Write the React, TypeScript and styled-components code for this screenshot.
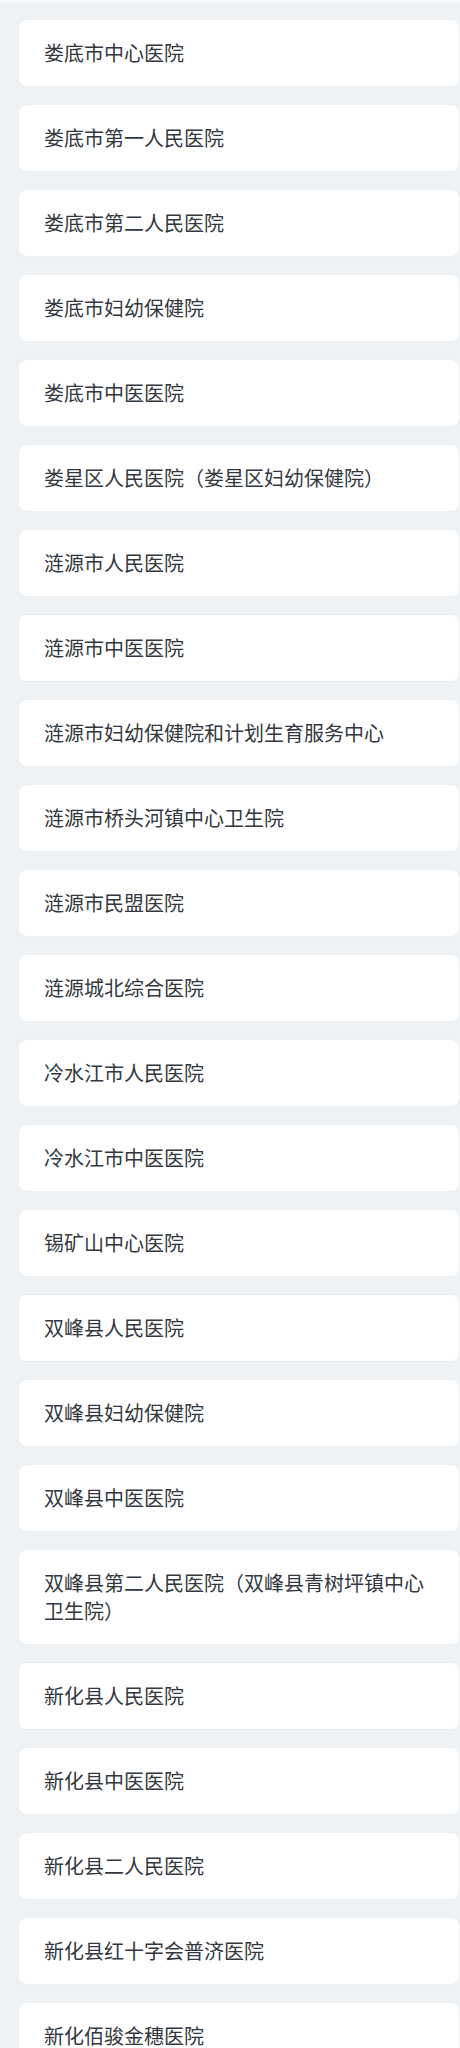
import React from "react";
import styled, { createGlobalStyle } from "styled-components";

const Global = createGlobalStyle`
  html, body { margin: 0; padding: 0; background: #eef2f5; }
  body { font-family: "Noto Sans CJK SC", "Noto Sans", sans-serif; }
`;

const Page = styled.div`
  display: flex;
  flex-direction: column;
  border-top: 3px solid #f6f8fa;
`;

const List = styled.ul`
  list-style: none;
  margin: 0;
  padding: 17px 1px 20px 19px;
  display: flex;
  flex-direction: column;
  gap: 19px;
`;

const Card = styled.li`
  background: #ffffff;
  border-radius: 7px;
  padding: 19px 25px;
  font-size: 20px;
  line-height: 28px;
  color: #333840;
  box-shadow: 0 0 1px rgba(0, 0, 0, 0.08);
`;

const names = [
  "娄底市中心医院",
  "娄底市第一人民医院",
  "娄底市第二人民医院",
  "娄底市妇幼保健院",
  "娄底市中医医院",
  "娄星区人民医院（娄星区妇幼保健院）",
  "涟源市人民医院",
  "涟源市中医医院",
  "涟源市妇幼保健院和计划生育服务中心",
  "涟源市桥头河镇中心卫生院",
  "涟源市民盟医院",
  "涟源城北综合医院",
  "冷水江市人民医院",
  "冷水江市中医医院",
  "锡矿山中心医院",
  "双峰县人民医院",
  "双峰县妇幼保健院",
  "双峰县中医医院",
  "双峰县第二人民医院（双峰县青树坪镇中心卫生院）",
  "新化县人民医院",
  "新化县中医医院",
  "新化县二人民医院",
  "新化县红十字会普济医院",
  "新化佰骏金穗医院",
];

export default function App() {
  return (
    <Page>
      <Global />
      <List>
        {names.map((n) => (
          <Card key={n}>{n}</Card>
        ))}
      </List>
    </Page>
  );
}
